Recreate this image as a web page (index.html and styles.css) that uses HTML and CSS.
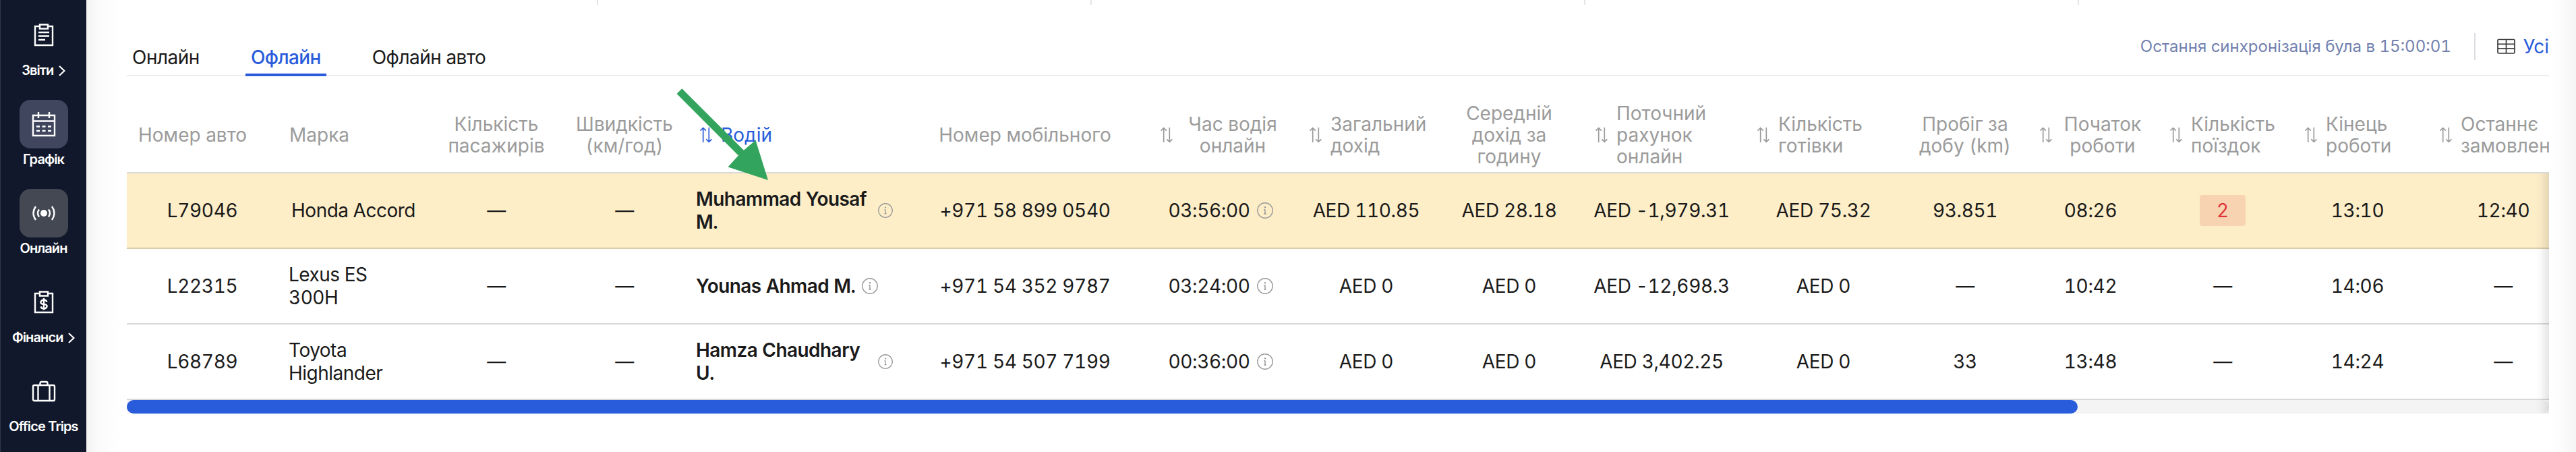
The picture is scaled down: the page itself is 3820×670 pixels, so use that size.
FILE: index.html
```html
<!DOCTYPE html>
<html lang="uk">
<head>
<meta charset="utf-8">
<title>Онлайн</title>
<link rel="stylesheet" href="styles.css">
</head>
<body>
<svg class="defs" width="0" height="0">
  <symbol id="sort" viewBox="0 0 28 28"><path d="M9.700 25V3.800M5.600 7.600l4.100-4 4.100 4M18.300 3v21.200M14.200 20.400l4.100 4 4.100-4" fill="none" stroke="currentColor" stroke-width="1.7"/></symbol>
  <symbol id="info" viewBox="0 0 24 24"><circle cx="12" cy="12" r="11.2" fill="none" stroke="currentColor" stroke-width="1.4"/><path d="M12 10.400v7M10.300 10.800h1.700M10.300 17h3.400" fill="none" stroke="currentColor" stroke-width="1.500"/><circle cx="12" cy="7.200" r="1.200" fill="currentColor"/></symbol>
</svg>
<div class="app">
  <nav class="sidebar">
    <a class="nav-item"><span class="nav-icon"><svg width="36" height="36" viewBox="0 0 36 36"><path d="M12 5H5v28h26V5h-7M12 2.5h12v6H12zM10 14h16M10 19.5h16M10 25h10"/></svg></span><span class="nav-label">Звіти <svg class="chev" width="10" height="16" viewBox="0 0 10 16"><path d="M1 1l7.5 7L1 15"/></svg></span></a>
    <a class="nav-item"><span class="nav-icon schedule"><svg width="36" height="38" viewBox="0 0 36 38"><path d="M2 6h32v30H2zM2 14.500h32M10 1v9M26 1v9"/><path d="M7 22.500h5M15.500 22.500h5M24 22.500h5M7 29h5M15.500 29h5M24 29h5"/></svg></span><span class="nav-label">Графік</span></a>
    <a class="nav-item"><span class="nav-icon online"><svg width="36" height="36" viewBox="0 0 36 36"><circle cx="18" cy="18" r="5" fill="#fff" stroke="none"/><path d="M6 8q-7 10 0 20M30 8q7 10 0 20M11 12.500q-4 5.500 0 11M25 12.500q4 5.500 0 11"/></svg></span><span class="nav-label">Онлайн</span></a>
    <a class="nav-item"><span class="nav-icon"><svg width="36" height="36" viewBox="0 0 36 36"><path d="M12 5H5v28h26V5h-7M12 2.500h12v6H12z"/><path d="M22.500 17.500q-1-3-4.500-3t-4.500 3 4.500 3.500 4.500 3.500-4.500 3-4.500-3M18 12v17.500"/></svg></span><span class="nav-label">Фінанси <svg class="chev" width="10" height="16" viewBox="0 0 10 16"><path d="M1 1l7.5 7L1 15"/></svg></span></a>
    <a class="nav-item"><span class="nav-icon"><svg width="36" height="36" viewBox="0 0 36 36"><rect x="2" y="9" width="32" height="23" rx="2"/><path d="M9.500 9v23M26.500 9v23M12.500 9V6q0-2 2-2h7q2 0 2 2v3"/></svg></span><span class="nav-label">Office Trips</span></a>
  </nav>
  <main class="main">
    <div class="cards"><i></i><i></i><i></i><i></i></div>
    <div class="toolbar">
      <div class="tabs"><a class="tab">Онлайн</a><a class="tab active">Офлайн</a><a class="tab">Офлайн авто</a></div>
      <div class="sync">
        <span class="sync-text">Остання синхронізація була в 15:00:01</span>
        <span class="all"><svg width="28" height="24" viewBox="0 0 28 24"><rect x="1" y="1.500" width="25" height="20.500" rx="1.500"/><path d="M1 8.300h25M1 15.200h25M13.500 1.500v20.500"/></svg>Усі</span>
      </div>
    </div>
    <div class="table">
      <div class="row head">
        <div class="left">Номер авто</div>
        <div class="left">Марка</div>
        <div>Кількість<br>пасажирів</div>
        <div>Швидкість<br>(км/год)</div>
        <div class="sorted left"><svg><use href="#sort"/></svg>Водій</div>
        <div>Номер мобільного</div>
        <div><svg><use href="#sort"/></svg><span class="grow">Час водія<br>онлайн</span></div>
        <div class="left"><svg><use href="#sort"/></svg><span>Загальний<br>дохід</span></div>
        <div>Середній<br>дохід за<br>годину</div>
        <div class="left"><svg><use href="#sort"/></svg><span>Поточний<br>рахунок<br>онлайн</span></div>
        <div class="left"><svg><use href="#sort"/></svg><span>Кількість<br>готівки</span></div>
        <div>Пробіг за<br>добу (km)</div>
        <div><svg><use href="#sort"/></svg><span class="grow">Початок<br>роботи</span></div>
        <div class="left"><svg><use href="#sort"/></svg><span>Кількість<br>поїздок</span></div>
        <div class="left"><svg><use href="#sort"/></svg><span>Кінець<br>роботи</span></div>
        <div class="left"><svg><use href="#sort"/></svg><span>Останнє<br>замовлення</span></div>
      </div>
      <div class="row marked">
        <div>L79046</div><div class="model">Honda Accord</div><div>—</div><div>—</div>
        <div class="driver"><b class="wrap">Muhammad Yousaf<br>M.</b><svg class="small"><use href="#info"/></svg></div>
        <div>+971 58 899 0540</div><div class="time">03:56:00<svg><use href="#info"/></svg></div>
        <div>AED 110.85</div><div>AED 28.18</div><div>AED -1,979.31</div><div>AED 75.32</div><div>93.851</div><div>08:26</div><div><span class="badge">2</span></div><div>13:10</div><div>12:40</div>
      </div>
      <div class="row">
        <div>L22315</div><div class="left model">Lexus ES<br>300H</div><div>—</div><div>—</div>
        <div class="driver"><b>Younas Ahmad M.</b><svg><use href="#info"/></svg></div>
        <div>+971 54 352 9787</div><div class="time">03:24:00<svg><use href="#info"/></svg></div>
        <div>AED 0</div><div>AED 0</div><div>AED -12,698.3</div><div>AED 0</div><div>—</div><div>10:42</div><div>—</div><div>14:06</div><div>—</div>
      </div>
      <div class="row">
        <div>L68789</div><div class="left model">Toyota<br>Highlander</div><div>—</div><div>—</div>
        <div class="driver"><b class="wrap">Hamza Chaudhary<br>U.</b><svg class="small"><use href="#info"/></svg></div>
        <div>+971 54 507 7199</div><div class="time">00:36:00<svg><use href="#info"/></svg></div>
        <div>AED 0</div><div>AED 0</div><div>AED 3,402.25</div><div>AED 0</div><div>33</div><div>13:48</div><div>—</div><div>14:24</div><div>—</div>
      </div>
      <div class="scrollbar"><div class="thumb"></div></div>
      <div class="edge"></div>
    </div>
  </main>
  <svg class="arrow" width="140" height="140" viewBox="0 0 140 140"><path d="M11.300 1.300L103 92.700l17.500-15L139 137l-59.500-19.500L95 100.500 3.600 9z" fill="#33a45d"/></svg>
</div>
</body>
</html>
```
FILE: styles.css
```css
* { box-sizing: border-box; }
body { margin: 0; background: #fff; font-family: Inter, "Liberation Sans", sans-serif; font-size: 28px; color: #1a1a1a; font-variant-numeric: tabular-nums; }
.defs { display: block; height: 0; }
.app { position: relative; display: flex; width: 3820px; height: 670px; overflow: hidden; }

.sidebar { width: 128px; flex: none; background: #12182b; border-left: 1px solid #30364a; padding: 16px 0 0; display: flex; flex-direction: column; gap: 28px; }
.nav-item { display: flex; flex-direction: column; align-items: center; height: 104px; flex: none; color: #fff; }
.nav-icon { width: 72px; height: 72px; border-radius: 16px; display: flex; align-items: center; justify-content: center; }
.nav-icon svg { fill: none; stroke: #fff; stroke-width: 2.4; }
.nav-icon.schedule { background: #3f465e; }
.nav-icon.online { background: #444853; }
.nav-label { height: 32px; line-height: 32px; font-size: 20px; font-weight: 600; letter-spacing: -0.9px; white-space: nowrap; }
.chev { fill: none; stroke: #fff; stroke-width: 2.2; margin-left: 3px; vertical-align: -2px; }

.main { width: 3692px; flex: none; padding: 0 40px 0 60px; background: linear-gradient(90deg, #f2f2f2 0, #fafafa 16px, #fefefe 40px, #fff 60px, #fff 3652px, #fcfcfc 3668px, #f5f5f5 3692px); }
.cards { display: flex; height: 7px; padding-left: 697px; overflow: hidden; }
.cards i { width: 732px; flex: none; border-left: 2px solid #e2e3e8; }
.toolbar { display: flex; justify-content: space-between; height: 106px; border-bottom: 2px solid #eee; }
.tabs { display: flex; gap: 60px; height: 106px; }
.tab { padding: 61px 8px 0; line-height: 34px; height: 106px; letter-spacing: -0.5px; white-space: nowrap; }
.tab.active { color: #295cdb; font-weight: 500; border-bottom: 4px solid #295cdb; letter-spacing: -0.65px; }
.sync { display: flex; padding-top: 42px; }
.sync-text { font-size: 24px; line-height: 40px; color: #7280ae; padding-right: 34px; border-right: 2px solid #dcdde3; height: 40px; }
.all { display: flex; align-items: center; gap: 11px; height: 40px; padding-left: 32px; color: #295cdb; }
.all svg { fill: none; stroke: #3a3a3a; stroke-width: 1.7; }

.table { position: relative; width: 3592px; overflow: hidden; }
.row { display: grid; grid-template-columns: 224px 224px 200px 180px 324px 360px 220px 212px 212px 240px 240px 180px 192px 200px 200px 232px; width: 3640px; height: 112px; border-bottom: 2px solid #d8d8d8; line-height: 34px; letter-spacing: -0.35px; }
.row > div { display: flex; align-items: center; justify-content: center; text-align: center; padding: 0 16px; white-space: nowrap; }
.row > .left, .row > .driver { justify-content: flex-start; text-align: left; }
.marked { background: #fdeec8; border-color: #d6cbaa; }
.row > .model { letter-spacing: -0.5px; }
.head { height: 144px; padding-top: 32px; color: #9b9b9b; line-height: 32px; letter-spacing: 0; }
.row.head > .left { padding: 0 17px; }
.head svg { width: 28px; height: 28px; flex: none; margin-right: 8px; }
.head .grow { flex: 1; }
.head .sorted { color: #295cdb; }
.driver b { font-weight: 600; letter-spacing: -0.55px; }
.driver .wrap { width: 271px; }
.driver svg, .time svg { width: 24px; height: 24px; flex: none; margin-left: 10px; color: #9b9b9b; }
.driver .small { width: 22px; height: 22px; margin-left: 0; }
.badge { width: 68px; height: 46px; line-height: 46px; border-radius: 4px; background: #f7d3b1; color: #e0343a; }
.scrollbar { height: 20px; background: #f4f4f4; border-radius: 0 10px 10px 0; }
.thumb { width: 2893px; height: 20px; border-radius: 10px; background: #295cdb; }
.edge { position: absolute; top: 144px; right: 0; bottom: 0; width: 20px; background: linear-gradient(90deg, rgba(0,0,0,0), rgba(0,0,0,.02) 35%, rgba(0,0,0,.1)); }
.arrow { position: absolute; left: 1000px; top: 130px; }
```
